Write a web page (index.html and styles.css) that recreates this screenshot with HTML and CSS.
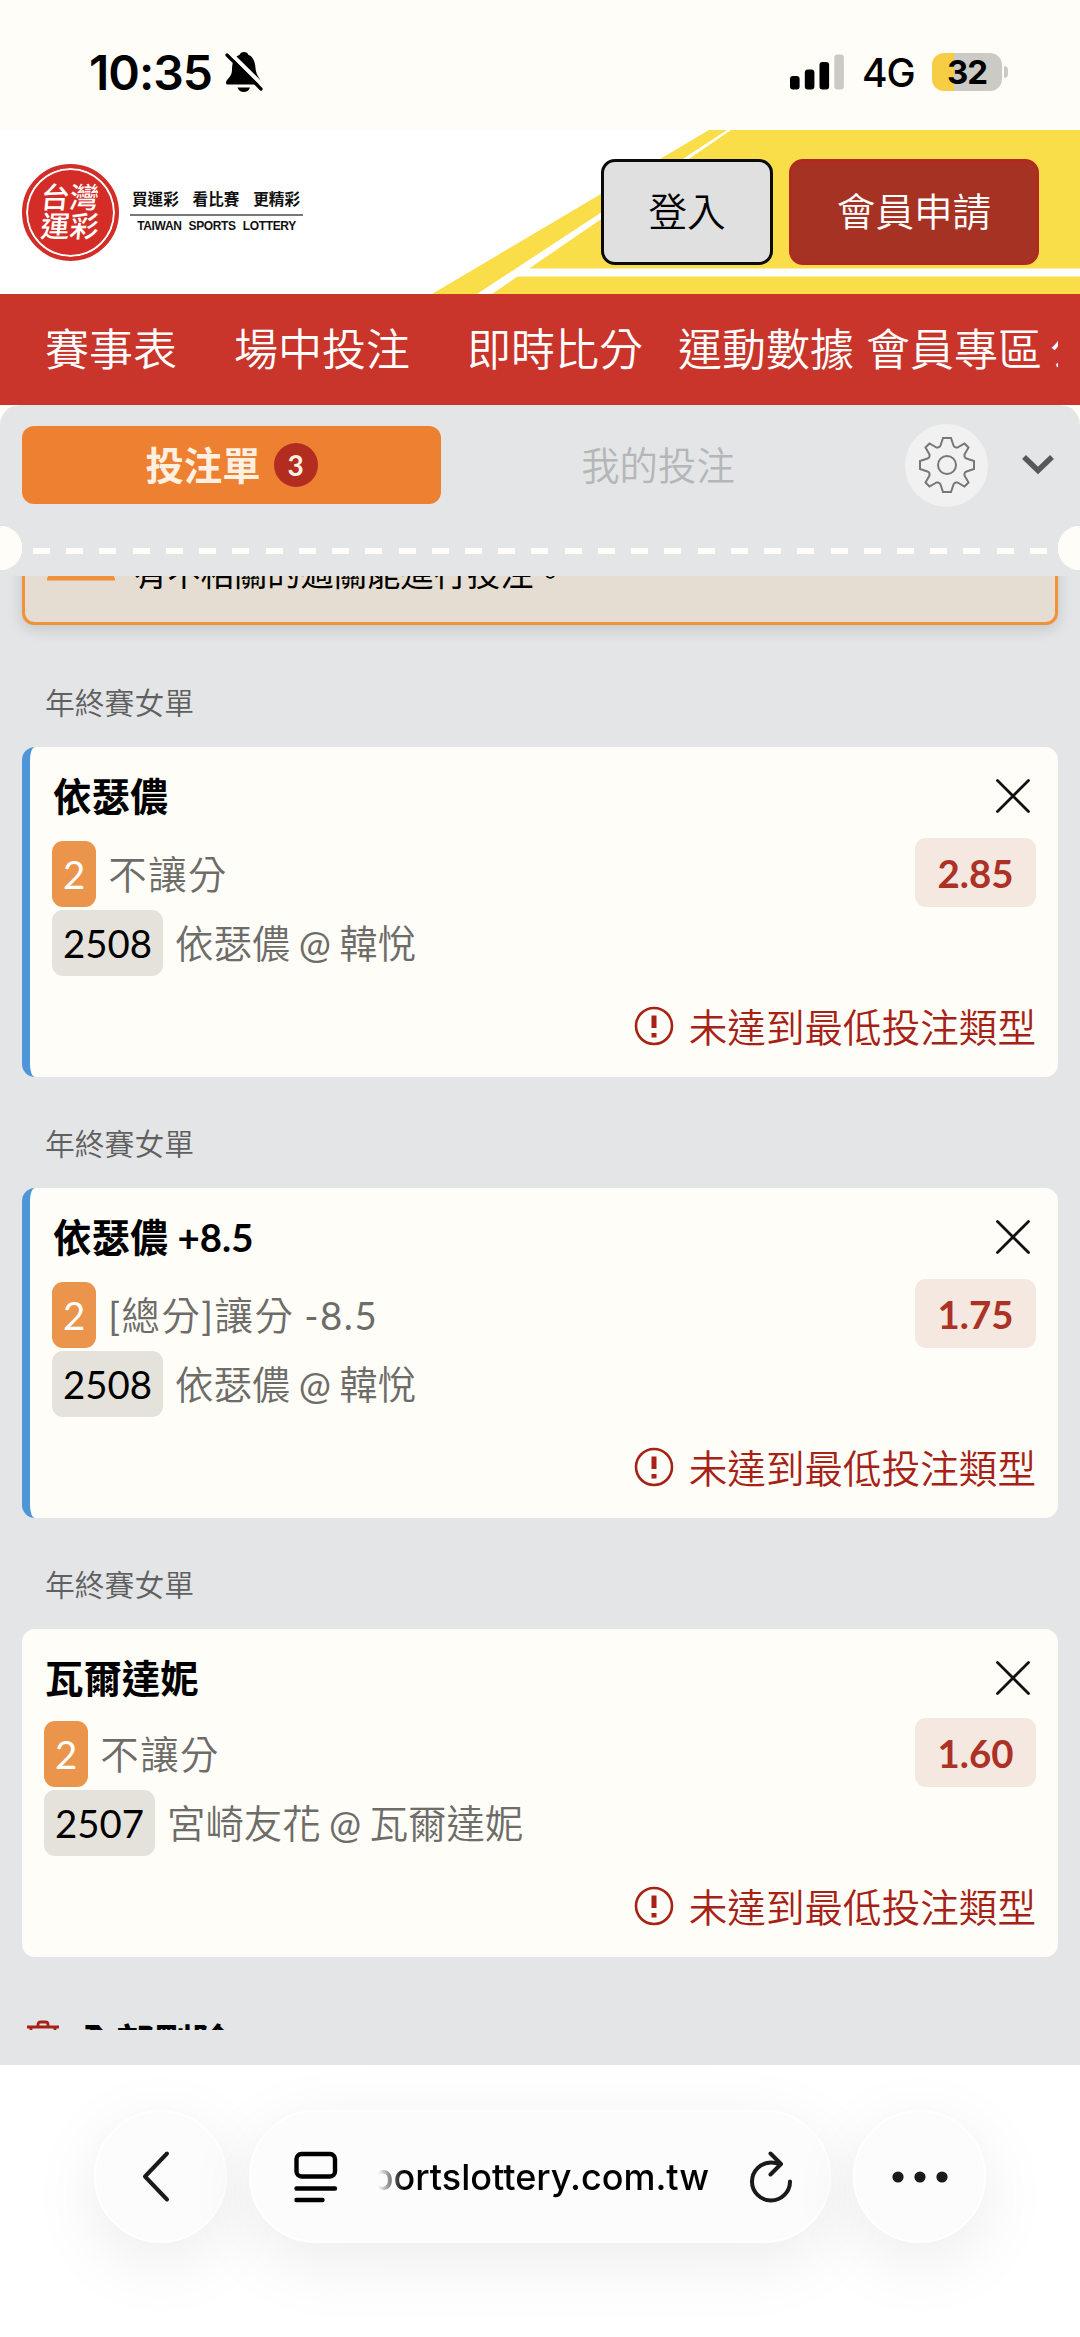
FILE: index.html
```html
<!DOCTYPE html>
<html lang="zh-Hant">
<head>
    <meta charset="UTF-8">
    <title>投注單</title>
    <link rel="stylesheet" href="styles.css">
</head>
<body>
<svg class="defs" width="0" height="0">
    <symbol id="close" viewBox="0 0 34 34"><path d="M1.5 1.5 32.5 32.5M32.5 1.5 1.5 32.5" fill="none" stroke="#111" stroke-width="2.8" stroke-linecap="round"/></symbol>
    <symbol id="warn" viewBox="0 0 40 40">
        <circle cx="20" cy="20" r="18" fill="none" stroke="#a62116" stroke-width="2.6"/>
        <path d="M17.5 9.5h5v12.5h-5zM17.5 27h5v4.5h-5z" fill="#a62116"/>
    </symbol>
</svg>
<!-- 狀態列 -->
<div class="status">
    <span class="time">10:35</span>
    <svg class="bell" width="38" height="42" viewBox="0 0 38 42">
        <path d="M1 32C1 28 7 26 7 19C7 9 11 5 14.500 4C15 2 17 1 19 1S23 2 23.500 4C27 5 30 9 30.500 17C31 25 36 28 36 32C36 33 35 33.500 34 33.500H3C2 33.500 1 33 1 32Z"/>
        <path d="M12.500 36.500H25C24 39.500 21.500 41 18.800 41S13.500 39.500 12.500 36.500Z"/>
        <path d="M4.500 1.500 39 35.500" stroke="#fffdf7" stroke-width="4"/>
        <path d="M2 4 36 38" stroke="#000" stroke-width="3.200" stroke-linecap="round"/>
    </svg>
    <svg class="signal" width="55" height="36" viewBox="0 0 55 36">
        <rect x="0" y="22" width="9.600" height="13.500" rx="3"/>
        <rect x="14.800" y="15.500" width="9.600" height="20" rx="3"/>
        <rect x="29.500" y="8" width="9.600" height="27.500" rx="3"/>
        <rect x="44.300" y="0.500" width="9.600" height="35" rx="3" fill="#cbcac5"/>
    </svg>
    <span class="net">4G</span>
    <div class="battery">32</div>
    <div class="nub"></div>
</div>
<!-- 頁首 -->
<div class="header">
    <svg class="headbg" width="1080" height="164" viewBox="0 0 1080 164">
        <path d="M709 0H1080V164H432Z" fill="#f9de4a"/>
        <path d="M727 0H731L492 164H477ZM528 138.500H1080V146.500H514Z" fill="#fff"/>
    </svg>
    <div class="seal"><span>台灣</span><span>運彩</span></div>
    <div class="slogan">
        <div class="slogan-zh"><span>買運彩</span><span>看比賽</span><span>更精彩</span></div>
        <div class="slogan-en">TAIWAN SPORTS LOTTERY</div>
    </div>
    <a class="btn login">登入</a>
    <a class="btn join">會員申請</a>
</div>
<div class="nav">
    <a class="item">賽事表</a><a class="item">場中投注</a><a class="item">即時比分</a><a class="item near">運動數據</a><a class="item near">會員專區</a><a class="item">公益</a>
</div>
<!-- 投注單 -->
<div class="slip">
    <div class="tabs">
        <a class="tab active">投注單<span class="count">3</span></a>
        <a class="tab mine">我的投注</a>
        <div class="gear">
            <svg width="56" height="56" viewBox="-28 -28 56 56" fill="none" stroke="#777" stroke-width="2">
                <circle r="9"/>
                <path d="M-4-27H4L6.500-19.500Q7-18 9-17.500L10.500-17.500 17.500-21.500 21.500-17.500 17.500-10.500V-8.500Q18-7 19.500-6.500L27-4V4L19.500 6.500Q18 7 17.500 8.500V10.500L21.500 17.500 17.500 21.500 10.500 17.500H9Q7 18 6.500 19.500L4 27H-4L-6.500 19.500Q-7 18-9 17.500H-10.500L-17.500 21.500-21.500 17.500-17.500 10.500V8.500Q-18 7-19.500 6.500L-27 4V-4L-19.500-6.500Q-18-7-17.500-8.500V-10.500L-21.500-17.500-17.500-21.500-10.500-17.500H-9Q-7-18-6.500-19.500Z"/>
            </svg>
        </div>
        <svg class="down" width="34" height="22" viewBox="0 0 34 22"><path d="M3 3 17 16.500 31 3" fill="none" stroke="#585858" stroke-width="5.500"/></svg>
    </div>
    <div class="cut"></div>
    <div class="list">
        <div class="notice">
            <svg width="68" height="60" viewBox="0 0 68 60"><path d="M34 3 64 54.500H4Z" fill="none" stroke="#f0923a" stroke-width="6"/></svg>
            <p>有不相關的過關能進行投注。</p>
        </div>
        <div class="group">年終賽女單</div>
        <div class="card linked">
            <div class="title"><b>依瑟儂</b><svg width="34" height="34"><use href="#close"/></svg></div>
            <div class="bet">
                <div>
                    <div class="row spaced"><span class="tag pick">2</span><span>不讓分</span></div>
                    <div class="row"><span class="tag">2508</span><span>依瑟儂 <em>@</em> 韓悅</span></div>
                </div>
                <span class="odds">2.85</span>
            </div>
            <div class="warn"><svg width="40" height="40"><use href="#warn"/></svg><span>未達到最低投注類型</span></div>
        </div>
        <div class="group">年終賽女單</div>
        <div class="card linked">
            <div class="title"><b>依瑟儂 +8.5</b><svg width="34" height="34"><use href="#close"/></svg></div>
            <div class="bet">
                <div>
                    <div class="row spaced"><span class="tag pick">2</span><span><em>[</em>總分<em>]</em>讓分 <em>-8.5</em></span></div>
                    <div class="row"><span class="tag">2508</span><span>依瑟儂 <em>@</em> 韓悅</span></div>
                </div>
                <span class="odds">1.75</span>
            </div>
            <div class="warn"><svg width="40" height="40"><use href="#warn"/></svg><span>未達到最低投注類型</span></div>
        </div>
        <div class="group">年終賽女單</div>
        <div class="card">
            <div class="title"><b>瓦爾達妮</b><svg width="34" height="34"><use href="#close"/></svg></div>
            <div class="bet">
                <div>
                    <div class="row spaced"><span class="tag pick">2</span><span>不讓分</span></div>
                    <div class="row"><span class="tag">2507</span><span>宮崎友花 <em>@</em> 瓦爾達妮</span></div>
                </div>
                <span class="odds">1.60</span>
            </div>
            <div class="warn"><svg width="40" height="40"><use href="#warn"/></svg><span>未達到最低投注類型</span></div>
        </div>
        <div class="clear">
            <svg width="32" height="38" viewBox="0 0 32 38" fill="none" stroke="#a62116" stroke-width="2.800"><path d="M0 8H32M11 8V5.500Q11 3 13.500 3H18.500Q21 3 21 5.500V8M4 8V36H28V8"/></svg>
            <b>全部刪除</b>
        </div>
    </div>
</div>
<!-- 瀏覽器工具列 -->
<div class="browser">
    <div class="round">
        <svg class="back" width="34" height="54" viewBox="0 0 34 54"><path d="M27 3.500 5 26.500 27 49.500" fill="none" stroke="#1a1a1a" stroke-width="4" stroke-linecap="round" stroke-linejoin="round"/></svg>
    </div>
    <div class="address">
        <svg width="44" height="52" viewBox="0 0 44 52" fill="none" stroke="#000" stroke-width="4.400" stroke-linecap="round"><rect x="2.500" y="3" width="38.500" height="22.500" rx="5"/><path d="M2.500 37.500H41M2.500 49H28.500"/></svg>
        <div class="url"><span>portslottery.com.tw</span></div>
        <svg width="44" height="54" viewBox="0 0 44 54" fill="none" stroke="#1a1a1a" stroke-width="4" stroke-linecap="round" stroke-linejoin="round"><path d="M41 31.500A19 19 0 1 1 22 12.500Q27 12.500 31.500 14.500M21.500 3.500 32 14 21.500 24.500"/></svg>
    </div>
    <div class="round">
        <svg width="56" height="12" viewBox="0 0 56 12" fill="#1a1a1a"><circle cx="6" cy="6" r="5.600"/><circle cx="28" cy="6" r="5.600"/><circle cx="50" cy="6" r="5.600"/></svg>
    </div>
</div>
</body>
</html>
```
FILE: styles.css
```css
*{
    box-sizing: border-box;
}
body{
    margin:0;
    width:1080px;
    height:2337px;
    overflow: hidden;
    background-color: #fffdf7;
    font-family: Lato, "Noto Sans CJK TC", sans-serif;
    font-size: 38.4px;
}
svg{
    display: block;
    flex: none;
}
.defs{
    position: absolute;
}
/*狀態列*/
.status{
    height:130px;
    padding: 14px 73px 0 89px;
    display: flex;
    align-items: center;
    font-family: Inter, sans-serif;
}
.time{
    font-size: 48px;
    font-weight: 600;
    width:136px;
    letter-spacing: -1px;
}
.signal{
    margin-left: auto;
}
.net{
    font-size: 39px;
    font-weight: 500;
    width:70px;
    margin-left: 17px;
    letter-spacing: -1px;
}
.battery{
    width:70px;
    height:38px;
    border-radius: 12px;
    background: linear-gradient(90deg,#f8cd46 22px,#cbcac5 22px);
    font-size: 33px;
    font-weight: 700;
    line-height: 38px;
    text-align: center;
    letter-spacing: -1px;
}
.nub{
    width:4px;
    height:12px;
    margin: 0 -1px 0 2px;
    border-radius: 0 6px 6px 0;
    background-color: #cbcac5;
}
/*頁首*/
.header{
    position: relative;
    height:164px;
    padding: 0 41px 0 22px;
    display: flex;
    align-items: center;
    background-color: #fff;
}
.headbg{
    position: absolute;
    left:0;
    top:0;
}
.seal{
    width:97px;
    height:97px;
    border-radius: 50%;
    border:4px solid #d42d27;
    background-color: #d42d27;
    box-shadow: inset 0 0 0 2px #fff;
    color: #fff;
    font-size: 29px;
    font-weight: 500;
    line-height: 29px;
    display: flex;
    flex-direction: column;
    align-items: center;
    justify-content: center;
    padding-bottom: 2px;
}
.seal span{
    transform: skewX(-6deg);
}
.slogan{
    width:173px;
    margin-left: 11px;
    color: #111;
}
.slogan-zh{
    height:26px;
    padding: 0 3px 0 2px;
    border-bottom: 2px solid #777;
    display: flex;
    justify-content: space-between;
    font-size: 15.6px;
    font-weight: 700;
    line-height: 18px;
}
.slogan-en{
    padding-top: 1px;
    font: bold 12px/18px "Liberation Sans", sans-serif;
    letter-spacing: -0.35px;
    text-align: center;
    word-spacing: 4px;
    white-space: nowrap;
}
.btn{
    position: relative;
    width:172px;
    height:106px;
    border:3px solid #0a0a0a;
    border-radius: 14px;
    background-color: #e0e0e0;
    color: #000;
    font-weight: 350;
    font-size: 38.6px;
    line-height: 98px;
    text-align: center;
}
.login{
    margin-left: auto;
}
.join{
    width:250px;
    margin-left: 16px;
    border-color: #b02a20;
    background-color: #a63224;
    color: #fff;
}
.nav{
    height:111px;
    padding-left: 45px;
    border-right: 22px solid #c9342b;
    background-color: #c9342b;
    display: flex;
    overflow: hidden;
    white-space: nowrap;
    color: #fff;
    font-size: 44px;
    font-weight: 350;
    line-height: 110px;
}
.item{
    flex: none;
    margin-right: 57px;
}
.item:nth-child(3){
    margin-right: 35px;
}
.near{
    margin-right: 12px;
}
.near + .near{
    margin-right: 8px;
}
/*投注單*/
.slip{
    height:1660px;
    border-radius: 20px 20px 0 0;
    background-color: #e4e5e7;
}
.tabs{
    height:121px;
    padding: 0 25px 1px 22px;
    display: flex;
    align-items: center;
}
.tab{
    width:419px;
    height:78px;
    display: flex;
    align-items: center;
    justify-content: center;
    padding-bottom: 5px;
    color: #b5b6b8;
    font-weight: 350;
}
.active{
    border-radius: 12px;
    background-color: #ee8131;
    color: #fff0e2;
    font-weight: 700;
}
.count{
    width:44px;
    height:44px;
    margin: 4px 0 0 13px;
    border-radius: 50%;
    background-color: #b22c20;
    font-size: 28px;
    line-height: 45px;
    text-align: center;
}
.mine{
    width:434px;
}
.gear{
    width:83px;
    height:83px;
    margin-left: 30px;
    border-radius: 50%;
    background-color: #f1f1f1;
    display: flex;
    align-items: center;
    justify-content: center;
}
.down{
    margin-left: auto;
}
/*撕線*/
.cut{
    height:50px;
    background:
        radial-gradient(circle at 0 22px,#fffdf7 22px,transparent 22.5px),
        radial-gradient(circle at 100% 22px,#fffdf7 22px,transparent 22.5px),
        repeating-linear-gradient(90deg,#fffdf7 0 17px,transparent 17px 33.230px) 33px 22px/1014px 6px no-repeat;
}
.list{
    height:1454px;
    padding: 0 22px;
    overflow: hidden;
}
.notice{
    height:120px;
    margin-top: -71px;
    padding: 15px 22px 0;
    border:3px solid #f0923a;
    border-radius: 12px;
    background-color: #e5ddd2;
    box-shadow: 0 4px 16px rgba(0,0,0,.14);
    display: flex;
}
.notice p{
    margin:27px 0 0 19px;
    font-size: 33.3px;
    line-height: 46px;
}
.group{
    height:122px;
    padding: 33px 0 0 23px;
    color: #606060;
    font-size: 29.8px;
    font-weight: 350;
    line-height: 89px;
}
.group + .card{
    margin-bottom: -11px;
}
.card{
    height:328px;
    border-radius: 13px;
    background-color: #fffdf7;
    padding: 20px 22px 0;
}
.linked{
    height:330px;
    border-left: 8px solid #4f96d8;
}
.title{
    height:69px;
    padding-right: 6px;
    display: flex;
    justify-content: space-between;
    line-height: 58px;
}
.title b{
    margin-left: 1px;
}
.title svg{
    margin-top: 12px;
}
.linked .title{
    height:71px;
}
.bet{
    display: flex;
    justify-content: space-between;
}
.row{
    height:66px;
    margin: 3px 0;
    display: flex;
    color: #6d6c69;
    font-weight: 350;
    line-height: 67px;
    word-spacing: -2px;
}
.row em{
    font-style: normal;
    font-weight: 400;
}
.spaced{
    letter-spacing: 1.5px;
}
.tag{
    height:66px;
    margin-right: 12px;
    padding: 0 11px;
    border-radius: 11px;
    background-color: #e5e2dc;
    color: #000;
    font-weight: 400;
    letter-spacing: 0;
}
.pick{
    background-color: #eb954c;
    color: #fff;
}
.odds{
    width:121px;
    height:69px;
    border-radius: 11px;
    background-color: #f4e8e0;
    color: #ab3225;
    font-weight: 700;
    line-height: 70px;
    text-align: center;
}
.warn{
    height:60px;
    margin-top: 17px;
    display: flex;
    align-items: center;
    justify-content: flex-end;
    gap: 15px;
    color: #a62116;
    font-size: 38.6px;
    font-weight: 350;
}
.warn span{
    padding-bottom: 3px;
}
.clear{
    display: flex;
    margin-top: 73px;
    padding-left: 5px;
    gap: 18px;
    line-height: 46px;
}
/*瀏覽器工具列*/
.browser{
    height:272px;
    padding-top: 45px;
    display: flex;
    justify-content: center;
    gap: 22px;
    background-color: #fff;
    overflow: hidden;
}
.round,.address{
    width:133px;
    height:133px;
    border:2px solid #fff;
    border-radius: 67px;
    background-color: #fcfcfc;
    box-shadow: 0 18px 70px rgba(0,0,0,.08);
    display: flex;
    align-items: center;
    justify-content: center;
}
.back{
    margin-right: 7px;
}
.address{
    width:582px;
    padding: 0 36px 0 43px;
    justify-content: space-between;
}
.url{
    width:331px;
    overflow: hidden;
    display: flex;
    justify-content: flex-end;
    white-space: nowrap;
    font: 500 36px/50px Inter, sans-serif;
    -webkit-mask-image: linear-gradient(90deg,transparent,#000 26px);
    mask-image: linear-gradient(90deg,transparent,#000 26px);
}
```
